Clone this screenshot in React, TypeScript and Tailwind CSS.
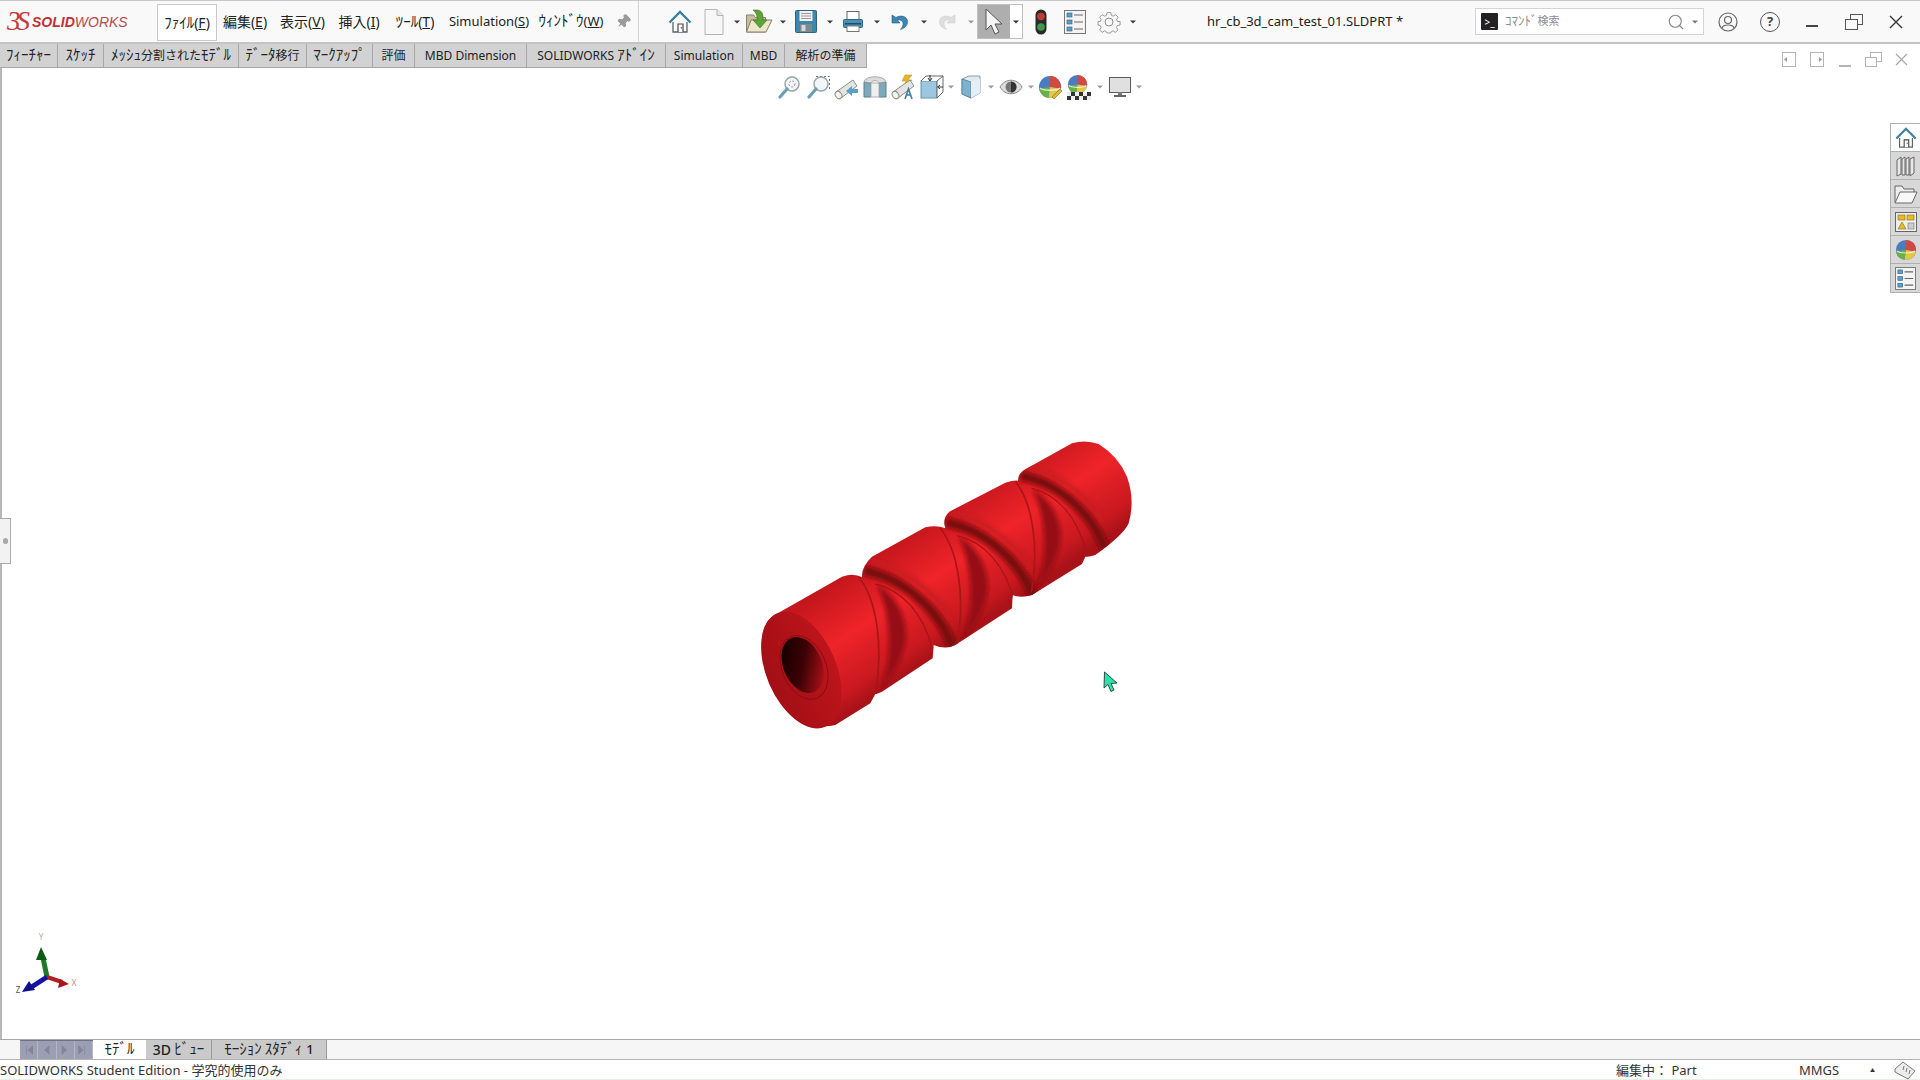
import React from "react";
import { Pin, Search } from "lucide-react";

const ui = "font-['Noto_Sans','Noto_Sans_CJK_JP',sans-serif]";

const menus = [
  { pre: "ﾌｧｲﾙ(", key: "F", w: "w-[60px]", size: "text-[14px]", active: true },
  { pre: "編集(", key: "E", w: "w-[56px]", size: "text-[14px]" },
  { pre: "表示(", key: "V", w: "w-[59px]", size: "text-[14px]" },
  { pre: "挿入(", key: "I", w: "w-[54px]", size: "text-[14px]" },
  { pre: "ﾂｰﾙ(", key: "T", w: "w-[58px]", size: "text-[14px]" },
  { pre: "Simulation(", key: "S", w: "w-[90px]", size: "text-[13px]" },
  { pre: "ｳｨﾝﾄﾞｳ(", key: "W", w: "w-[74px]", size: "text-[13px]" },
];

const tabs = [
  { label: "ﾌｨｰﾁｬｰ", w: "w-[58px]" },
  { label: "ｽｹｯﾁ", w: "w-[46px]" },
  { label: "ﾒｯｼｭ分割されたﾓﾃﾞﾙ", w: "w-[135px]" },
  { label: "ﾃﾞｰﾀ移行", w: "w-[68px]" },
  { label: "ﾏｰｸｱｯﾌﾟ", w: "w-[66px]" },
  { label: "評価", w: "w-[42px]" },
  { label: "MBD Dimension", w: "w-[112px]" },
  { label: "SOLIDWORKS ｱﾄﾞｲﾝ", w: "w-[139px]" },
  { label: "Simulation", w: "w-[77px]" },
  { label: "MBD", w: "w-[42px]" },
  { label: "解析の準備", w: "w-[82px]" },
];

// half width katakana looks too small next to the rest, so it gets its own size
function T({ text, kana = "text-[15px]" }: { text: string; kana?: string }) {
  return (
    <span className="whitespace-pre">
      {text.split(/([\uFF61-\uFF9F]+)/).map((part, i) =>
        i % 2 === 1 ? (
          <span key={i} className={`${kana} leading-none`}>{part}</span>
        ) : (
          <span key={i}>{part}</span>
        )
      )}
    </span>
  );
}

function Caret({ w = "w-[13px]", light = false }: { w?: string; light?: boolean }) {
  return (
    <div className={`${w} flex items-center justify-center`}>
      <svg width="6" height="4" viewBox="0 0 6 4">
        <path d="M0 0.5h6L3 3.5z" fill={light ? "#9a9a9a" : "#3c3c3c"} />
      </svg>
    </div>
  );
}

function Cell({ children, w = "w-[34px]" }: { children: React.ReactNode; w?: string }) {
  return <div className={`${w} h-full flex items-center justify-center`}>{children}</div>;
}

function HomeIcon({ size = 24, fill = "none" }: { size?: number; fill?: string }) {
  return (
    <svg width={size} height={size} viewBox="0 0 24 24">
      <path d="M5 12v10h14V12" fill={fill} stroke="#55666e" strokeWidth="1.3" />
      <path d="M1.5 12.5 12 2l10.5 10.5" fill="none" stroke="#3f7f9c" strokeWidth="2.4" />
      <path d="M10 22v-8h5v8" fill="#fff" stroke="#444" strokeWidth="1.2" />
      <rect x="12.8" y="17" width="1" height="1.6" fill="#444" />
    </svg>
  );
}

function NewDoc() {
  return (
    <svg width="22" height="28" viewBox="0 0 22 28">
      <path d="M2 1.5h12l6 6v19H2z" fill="#f7f7f7" stroke="#b4b4b4" />
      <path d="M14 1.5v6h6" fill="#e8e8e8" stroke="#b4b4b4" />
    </svg>
  );
}

function OpenIcon() {
  return (
    <svg width="28" height="26" viewBox="0 0 28 26">
      <path d="M1.5 6h7l2 2.5h10V23H1.5z" fill="#c9bf9d" stroke="#85806c" />
      <path d="M1.5 23 6 11h21l-6 12z" fill="#ece6cc" stroke="#85806c" />
      <path d="M8 1h4c4 0 6 3 6 7v3h4l-7 8-7-8h4V8c0-3-2-5-4-7z" fill="#5ea338" stroke="#3b7a20" strokeWidth=".6" />
    </svg>
  );
}

function SaveIcon() {
  return (
    <svg width="22" height="23" viewBox="0 0 22 23">
      <path d="M0.5 1.5a1 1 0 0 1 1-1h19a1 1 0 0 1 1 1v20a1 1 0 0 1-1 1h-19a1 1 0 0 1-1-1z" fill="#3f86aa" stroke="#2d6584" />
      <rect x="4.5" y="1" width="13" height="10" fill="#f2f2f2" />
      <path d="M6 3.5h10M6 6h10M6 8.5h10" stroke="#9a9a9a" />
      <rect x="5" y="14" width="12" height="8" fill="#7a8a90" />
      <rect x="6.5" y="15" width="4" height="6" fill="#d8d8d8" />
    </svg>
  );
}

function PrintIcon() {
  return (
    <svg width="20" height="21" viewBox="0 0 20 21">
      <rect x="4" y="0.5" width="12" height="8" fill="#fff" stroke="#666" />
      <rect x="0.5" y="8.5" width="19" height="8" rx="1" fill="#4a90b4" stroke="#2b6a8b" />
      <rect x="2" y="12" width="16" height="1.5" fill="#1c4d66" />
      <rect x="4" y="15" width="12" height="5.5" fill="#fff" stroke="#777" />
    </svg>
  );
}

function UndoIcon({ color = "#3b86b4", stroke = "#2a5f80", flip = false }: { color?: string; stroke?: string; flip?: boolean }) {
  return (
    <svg className={flip ? "-scale-x-100" : ""} width="18" height="18" viewBox="0 0 18 18">
      <path d="M1 2v8h8L6.5 7.5C8 6.5 11.5 7 12 10c.3 2-.5 4-2.500 6.500 5-1.500 7.500-5 7-8.500C16 3.500 10 1.500 5 4.500z" fill={color} stroke={stroke} strokeWidth=".6" />
    </svg>
  );
}

function ArrowCursor() {
  return (
    <svg width="20" height="28" viewBox="0 0 20 28">
      <path d="M2 1v21l5-5 4 9 4-2-4-8h7z" fill="#f5f5f5" stroke="#555" />
    </svg>
  );
}

function Traffic() {
  return (
    <svg width="12" height="26" viewBox="0 0 12 26">
      <rect x="0.500" y="0.500" width="11" height="25" rx="5.500" fill="#2a2a2a" />
      <circle cx="6" cy="7.500" r="3.800" fill="#c03a34" />
      <circle cx="6" cy="18" r="3.800" fill="#3d9a4c" />
    </svg>
  );
}

function ListIcon({ size = 22 }: { size?: number }) {
  return (
    <svg width={size} height={size + 2} viewBox="0 0 22 24">
      <rect x="0.500" y="0.500" width="21" height="23" fill="#f4f4f4" stroke="#777" />
      <rect x="3" y="3" width="5" height="4" fill="#5f9dc4" stroke="#2b5f80" strokeWidth=".6" />
      <rect x="3" y="10" width="5" height="4" fill="#5f9dc4" stroke="#2b5f80" strokeWidth=".6" />
      <rect x="3" y="17" width="5" height="4" fill="#5f9dc4" stroke="#2b5f80" strokeWidth=".6" />
      <path d="M10 5h9M10 12h9M10 19h9" stroke="#666" strokeWidth="1.200" />
    </svg>
  );
}

function GearIcon() {
  return (
    <svg width="24" height="24" viewBox="0 0 24 24" fill="none" stroke="#8c8c8c" strokeWidth="1">
      <circle cx="12" cy="12" r="4" />
      <path d="M10 1.500h4l.7 3.200 2 .9 2.800-1.700 2.800 2.800-1.700 2.800.9 2 3-.0v4l-3.200.7-.9 2 1.700 2.800-2.800 2.800-2.800-1.700-2 .9-.7 1.500h-4l-.7-1.500-2-.9-2.800 1.700-2.800-2.800 1.700-2.800-.9-2-2.600-.7v-4l2.600-.0.900-2-1.700-2.800 2.800-2.800 2.800 1.700 2-.9z" transform="translate(1.300 1.200) scale(.89)" />
    </svg>
  );
}

function Ball({ size = 24, id, pencil = false }: { size?: number; id: string; pencil?: boolean }) {
  return (
    <svg width={size} height={size} viewBox="0 0 24 24">
      <defs>
        <clipPath id={id}>
          <circle cx="12" cy="12" r="11" />
        </clipPath>
      </defs>
      <g clipPath={`url(#${id})`}>
        <rect width="24" height="24" fill="#4a7cc4" />
        <path d="M12 12 12 0h13v14z" fill="#cf4a40" />
        <path d="M12 12 24 14v11H10z" fill="#e0c84a" />
        <path d="M12 12 10 25H-2V14z" fill="#6cb04a" />
        <path d="M2 13c3 3 17 3 20 0" fill="none" stroke="#fff" strokeWidth="1.300" opacity=".75" />
      </g>
      {pencil && <path d="M14 22 22 14l2 2-8 8z" fill="#d9b93c" stroke="#8a7420" strokeWidth=".6" />}
    </svg>
  );
}

function Zoomer({ dashed = false }: { dashed?: boolean }) {
  return (
    <svg width="24" height="24" viewBox="0 0 24 24">
      {dashed && <path d="M9 1.500h13.500V15" fill="none" stroke="#777" strokeWidth="1" strokeDasharray="2 2" />}
      <circle cx="14" cy="9" r="7" fill="#f3f5f6" stroke="#98a5ab" strokeWidth="1.500" />
      <path d="M9 14 2 22" stroke="#6a9fb6" strokeWidth="3.200" strokeLinecap="round" />
      {!dashed && <circle cx="14" cy="9" r="3" fill="none" stroke="#8c9aa0" strokeDasharray="2 1.500" />}
    </svg>
  );
}

function Scope({ flash = false }: { flash?: boolean }) {
  return (
    <svg width="26" height="26" viewBox="0 0 26 26">
      {flash && <path d="M14 1h7l-4 5h4l-8 7 2-6h-4z" fill="#e6b422" stroke="#b08a16" strokeWidth=".5" />}
      <path d="M2 18 19 6l4 6L7 24z" fill="#e4e4e0" stroke="#8b8b86" />
      <ellipse cx="4.500" cy="21" rx="3" ry="4" fill="#f3f3ef" stroke="#8b8b86" transform="rotate(-35 4.500 21)" />
      {flash ? (
        <path d="M14 25l3.500-10L21 25M15 21h5" fill="none" stroke="#3f7f9c" strokeWidth="1.600" />
      ) : (
        <path d="M24 15h-6v-3l-6 5 6 5v-3h6z" fill="#5a9fc6" />
      )}
    </svg>
  );
}

function SectionIcon() {
  return (
    <svg width="26" height="24" viewBox="0 0 26 24">
      <path d="M2 7v15h7V8z" fill="#7ea9b8" stroke="#5b808c" />
      <path d="M17 8v14h7V7z" fill="#7ea9b8" stroke="#5b808c" />
      <path d="M9 8h8v14H9z" fill="#f0f0f0" stroke="#b0b0b0" />
      <path d="M2 7c1-7 21-7 22 0l-7 1c-1-3-7-3-8 0z" fill="#dcdcdc" stroke="#8f8f8f" strokeWidth=".7" />
    </svg>
  );
}

function ViewBox() {
  return (
    <svg width="24" height="24" viewBox="0 0 24 24">
      <rect x="1" y="6" width="16" height="17" fill="#9bc8e0" stroke="#6a94a8" />
      <path d="M1 6 6 1h17v16l-6 6V6" fill="#fff" stroke="#666" />
      <path d="M17 6 23 1" stroke="#666" />
      <path d="M10 0v5M8 3l2 3 2-3" fill="none" stroke="#333" />
      <path d="M23 12h-5M20 10l-2.500 2 2.500 2" fill="none" stroke="#333" />
    </svg>
  );
}

function CubeIcon() {
  return (
    <svg width="20" height="24" viewBox="0 0 20 24">
      <path d="M1 4 8 1h11v17l-9 5-9-4z" fill="#dfeaf0" stroke="#8e9ea6" />
      <path d="M1 4l9 3v16l-9-4z" fill="#7fb2cf" stroke="#5a8aa4" />
      <path d="M10 7l9-3v14l-9 5z" fill="#e4eff5" />
    </svg>
  );
}

function EyeIcon() {
  return (
    <svg width="24" height="18" viewBox="0 0 24 18">
      <path d="M1 9c5-9 17-9 22 0-5 9-17 9-22 0z" fill="#dedede" stroke="#888" />
      <circle cx="12" cy="9" r="5.500" fill="#777" />
      <path d="M12 3.500a5.500 5.500 0 0 1 0 11z" fill="#333" />
    </svg>
  );
}

function MonitorIcon() {
  return (
    <svg width="22" height="22" viewBox="0 0 22 22">
      <rect x="0.500" y="1.500" width="21" height="15" fill="#e0e0e0" stroke="#5a5a5a" />
      <rect x="9" y="16" width="4" height="3" fill="#777" />
      <rect x="5" y="19" width="12" height="2" fill="#666" />
    </svg>
  );
}

function BallChecker() {
  return (
    <div className="relative w-[24px] h-[26px]">
      <Ball size={21} id="ball-c" />
      <svg className="absolute left-0 bottom-0" width="24" height="8" viewBox="0 0 24 8">
        <rect width="24" height="8" fill="#333" />
        <path d="M0 0h4v4H0zM8 0h4v4H8zM16 0h4v4h-4zM4 4h4v4H4zM12 4h4v4h-4zM20 4h4v4h-4z" fill="#eee" />
      </svg>
    </div>
  );
}

function DocBtn({ children }: { children: React.ReactNode }) {
  return <div className="w-[28px] flex items-center justify-center">{children}</div>;
}

function Model() {
  const silhouette =
    "M110 578 300 470Q335 458 360 472Q358 440 390 410L550 322Q585 315 610 325Q600 295 622 275L790 188Q815 180 828 182Q828 160 850 148L990 70Q1030 58 1070 72Q1130 110 1155 170Q1180 240 1160 310Q1145 345 1060 405Q1040 412 1030 410L1020 432 870 525Q835 535 812 525L810 565 640 675Q610 690 575 675L572 715 420 815Q405 822 400 822L385 850 280 915Q240 925 200 910Q140 880 100 800Q60 720 62 640Q70 595 110 578Z";
  const groove = (
    <g>
      <path d="M350 470C405 540 425 680 400 820" fill="none" stroke="#a81419" strokeWidth="5" filter="url(#soft)" />
      <path d="M405 495C475 530 505 620 488 680C475 730 450 770 415 812C448 720 455 610 405 495Z" fill="#960d13" filter="url(#soft2)" />
      <path d="M400 492C480 510 545 580 572 690" fill="none" stroke="#a81318" strokeWidth="4" filter="url(#soft)" />
      <path d="M365 452C480 472 590 565 632 682" fill="none" stroke="#7a0a10" strokeWidth="30" filter="url(#soft2)" />
      <path d="M380 422C480 442 580 515 625 595" fill="none" stroke="#c61b20" strokeWidth="14" filter="url(#soft2)" />
    </g>
  );
  return (
    <svg className="absolute left-[740px] top-[352px]" width="420" height="320" viewBox="0 0 1260 960">
      <defs>
        <linearGradient id="body" gradientUnits="userSpaceOnUse" x1="300" y1="470" x2="495" y2="759">
          <stop offset="0" stopColor="#c4161c" />
          <stop offset=".22" stopColor="#d91d23" />
          <stop offset=".45" stopColor="#ef2429" />
          <stop offset=".62" stopColor="#dd1f25" />
          <stop offset=".85" stopColor="#c9191f" />
          <stop offset="1" stopColor="#a81218" />
        </linearGradient>
        <linearGradient id="hole" x1=".1" y1=".1" x2=".9" y2=".9">
          <stop offset="0" stopColor="#120000" />
          <stop offset=".5" stopColor="#3c0205" />
          <stop offset=".85" stopColor="#8f0d13" />
          <stop offset="1" stopColor="#b5141a" />
        </linearGradient>
        <linearGradient id="face" x1="0" y1="0" x2="1" y2="0">
          <stop offset="0" stopColor="#a20f15" />
          <stop offset="1" stopColor="#bd151b" />
        </linearGradient>
        <filter id="soft">
          <feGaussianBlur stdDeviation="2" />
        </filter>
        <filter id="soft2">
          <feGaussianBlur stdDeviation="6" />
        </filter>
        <clipPath id="sil">
          <path d={silhouette} />
        </clipPath>
      </defs>
      <path d={silhouette} fill="url(#body)" />
      <g clipPath="url(#sil)">
        {groove}
        <g transform="translate(245 -145)">{groove}</g>
        <g transform="translate(488 -262) scale(.95)">{groove}</g>
      </g>
      <ellipse cx="178" cy="750" rx="105" ry="185" transform="rotate(-23 178 750)" fill="url(#face)" />
      <ellipse cx="186" cy="742" rx="66" ry="100" transform="rotate(-23 186 742)" fill="none" stroke="#8c0d13" strokeWidth="3" />
      <ellipse cx="182" cy="735" rx="58" ry="88" transform="rotate(-23 182 735)" fill="url(#hole)" />
    </svg>
  );
}

function Triad() {
  return (
    <svg className="absolute left-0 top-[860px]" width="90" height="80" viewBox="0 0 90 80">
      <path d="M45 49 41 30" stroke="#1f7a25" strokeWidth="5" />
      <path d="M39 19l6 13H34z" fill="#0e5a14" />
      <path d="M45 49 60 54" stroke="#b02020" strokeWidth="4" />
      <path d="M67 56l-11 4 2-9z" fill="#a81818" />
      <path d="M45 49 28 60" stroke="#1414a0" strokeWidth="5" />
      <path d="M20 64l13-2-6-9z" fill="#10108c" />
      <text x="39" y="12" fontSize="8" fill="#9ab89a" textAnchor="middle">Y</text>
      <text x="72" y="58" fontSize="8" fill="#c98a8a" textAnchor="middle">X</text>
      <text x="16" y="65" fontSize="8" fill="#555" textAnchor="middle">Z</text>
    </svg>
  );
}

export default function App() {
  return (
    <div className={`w-[1920px] h-[1080px] flex flex-col overflow-hidden bg-white text-[#222] ${ui}`}>
      {/* title bar */}
      <div className="h-[44px] shrink-0 flex bg-[#f9f9f9] border-t border-t-[#c8c8c8] border-b-[2px] border-b-[#c4c4c4]">
        <div className="w-[157px] flex items-center pl-[7px] gap-[6px]">
          <span className="font-['Liberation_Serif',serif] italic text-[27px] leading-none text-[#c8383c] tracking-[-4px]">3S</span>
          <span className="font-['Liberation_Sans',sans-serif] italic text-[14px] text-[#bf3134] leading-none">
            <span className="font-bold">SOLID</span>
            <span className="text-[#b8494b]">WORKS</span>
          </span>
        </div>
        {menus.map((m) => (
          <div
            key={m.key + m.pre}
            className={`${m.w} ${m.size} flex items-center justify-center ${m.active ? "bg-white border border-[#c8c8c8] mt-[3px] mb-px" : ""}`}
          >
            <T text={m.pre} />
            <span className="underline">{m.key}</span>)
          </div>
        ))}
        <div className="w-[31px] flex items-center justify-center border-r border-[#d4d4d4]">
          <Pin size={15} fill="#9a9a9a" stroke="#9a9a9a" className="rotate-45" />
        </div>
        <div className="w-[1px]" />
        <div className="flex pl-[23px]">
          <Cell><HomeIcon /></Cell>
          <Cell><NewDoc /></Cell>
          <Caret w="w-[11px]" />
          <Cell><OpenIcon /></Cell>
          <Caret />
          <Cell><SaveIcon /></Cell>
          <Caret />
          <Cell><PrintIcon /></Cell>
          <Caret />
          <Cell><UndoIcon /></Cell>
          <Caret />
          <Cell><UndoIcon color="#dedede" stroke="#cfcfcf" flip /></Cell>
          <Caret light />
          <div className="w-[46px] my-[3px] flex border border-[#c0c0c0]">
            <div className="w-[32px] bg-[#aeaeae] flex items-center justify-center">
              <ArrowCursor />
            </div>
            <div className="flex-1 bg-white flex items-center justify-center">
              <svg width="6" height="4" viewBox="0 0 6 4">
                <path d="M0 0.500h6L3 3.500z" fill="#333" />
              </svg>
            </div>
          </div>
          <Cell w="w-[35px]"><Traffic /></Cell>
          <Cell><ListIcon /></Cell>
          <Cell><GearIcon /></Cell>
          <Caret w="w-[14px]" />
        </div>
        <div className="w-[335px] pl-[67px] flex items-center text-[13px] whitespace-nowrap">hr_cb_3d_cam_test_01.SLDPRT *</div>
        <div className="w-[229px] my-[7px] bg-white border border-[#d4d4d4] flex items-center pl-[5px] pr-[5px]">
          <div className="w-[17px] h-[17px] bg-[#222] rounded-[1px] flex items-center justify-center text-white text-[10px] leading-none">&gt;_</div>
          <span className="ml-[7px] text-[11px] text-[#8c8c8c]"><T text="ｺﾏﾝﾄﾞ検索" kana="text-[13px]" /></span>
          <Search size={18} stroke="#8a8a8a" strokeWidth={1.5} className="ml-auto" />
          <div className="ml-[7px]">
            <svg width="6" height="4" viewBox="0 0 6 4">
              <path d="M0 0.500h6L3 3.500z" fill="#777" />
            </svg>
          </div>
        </div>
        <div className="flex pl-[3px]">
          <Cell w="w-[42px]">
            <svg width="20" height="20" viewBox="0 0 20 20" fill="none" stroke="#666" strokeWidth="1.200">
              <circle cx="10" cy="10" r="9" />
              <circle cx="10" cy="8" r="3.500" />
              <path d="M4 16c1-4 11-4 12 0" />
            </svg>
          </Cell>
          <Cell w="w-[42px]">
            <div className="w-[20px] h-[20px] rounded-full border border-[#555] flex items-center justify-center text-[13px] font-bold leading-none text-[#444]">?</div>
          </Cell>
          <Cell w="w-[42px]"><div className="w-[12px] h-[2px] bg-[#444] mt-[9px]" /></Cell>
          <Cell w="w-[42px]">
            <svg width="18" height="16" viewBox="0 0 18 16" fill="none" stroke="#555">
              <rect x="5.500" y="0.500" width="12" height="10" />
              <rect x="0.500" y="5.500" width="12" height="10" fill="#f9f9f9" />
            </svg>
          </Cell>
          <Cell w="w-[42px]">
            <svg width="14" height="14" viewBox="0 0 14 14" stroke="#333" strokeWidth="1.400">
              <path d="M1 1l12 12M13 1 1 13" />
            </svg>
          </Cell>
        </div>
      </div>

      {/* command manager tabs */}
      <div className="h-[24px] shrink-0 flex text-[12px]">
        {tabs.map((t) => (
          <div
            key={t.label}
            className={`${t.w} flex items-center justify-center bg-[#d2d2d2] border-r border-b border-[#a8a8a8] whitespace-nowrap`}
          >
            <T text={t.label} />
          </div>
        ))}
        <div className="flex-1 flex items-start justify-end pr-[5px] pt-[8px]">
          <div className="flex">
            <DocBtn>
              <svg width="14" height="15" viewBox="0 0 14 15" fill="none" stroke="#b4b4b4">
                <rect x="0.500" y="0.500" width="13" height="14" />
                <path d="M5 5v5L2 7.500z" fill="#999" stroke="none" />
              </svg>
            </DocBtn>
            <DocBtn>
              <svg width="14" height="15" viewBox="0 0 14 15" fill="none" stroke="#b4b4b4">
                <rect x="0.500" y="0.500" width="13" height="14" />
                <path d="M9 5v5l3-2.500z" fill="#999" stroke="none" />
              </svg>
            </DocBtn>
            <DocBtn><div className="w-[12px] h-[2px] bg-[#b4b4b4] mt-[12px]" /></DocBtn>
            <DocBtn>
              <svg width="17" height="15" viewBox="0 0 17 15" fill="none" stroke="#b4b4b4">
                <rect x="5.500" y="0.500" width="11" height="9" />
                <rect x="0.500" y="5.500" width="11" height="9" fill="#fff" />
              </svg>
            </DocBtn>
            <DocBtn>
              <svg width="13" height="13" viewBox="0 0 13 13" stroke="#a8a8a8" strokeWidth="1.200">
                <path d="M1 1l11 11M12 1 1 12" />
              </svg>
            </DocBtn>
          </div>
        </div>
      </div>

      {/* graphics area */}
      <div className="flex-1 relative border-l-2 border-l-[#b8b8b8] bg-white">
        <div className="absolute left-[774px] top-[5px] h-[28px] flex items-center">
          <Cell w="w-[28px]"><Zoomer /></Cell>
          <Cell w="w-[29px]"><Zoomer dashed /></Cell>
          <Cell w="w-[28px]"><Scope /></Cell>
          <Cell w="w-[28px]"><SectionIcon /></Cell>
          <Cell w="w-[29px]"><Scope flash /></Cell>
          <Cell w="w-[28px]"><ViewBox /></Cell>
          <Caret w="w-[10px]" light />
          <Cell w="w-[29px]"><CubeIcon /></Cell>
          <Caret w="w-[11px]" light />
          <Cell w="w-[29px]"><EyeIcon /></Cell>
          <Caret w="w-[11px]" light />
          <Cell w="w-[28px]"><Ball id="ball-a" pencil /></Cell>
          <Cell w="w-[30px]"><BallChecker /></Cell>
          <Caret w="w-[11px]" light />
          <Cell w="w-[29px]"><MonitorIcon /></Cell>
          <Caret w="w-[10px]" light />
        </div>

        <div className="absolute right-0 top-[55px] w-[30px] flex flex-col border border-r-0 border-[#b0b0b0] bg-[#d8d8d8]">
          <div className="h-[28px] bg-white border-b border-[#b0b0b0] flex items-center justify-center"><HomeIcon size={22} /></div>
          <div className="h-[28px] border-b border-[#b0b0b0] flex items-center justify-center">
            <svg width="20" height="22" viewBox="0 0 20 22" fill="#e8e8e8" stroke="#666">
              <path d="M1 5 5 2v17l-4 2zM6 4l3-2v18H6zM10 4l3-2v18h-3zM14 4l4-2v16l-4 3z" />
            </svg>
          </div>
          <div className="h-[28px] border-b border-[#b0b0b0] flex items-center justify-center">
            <svg width="24" height="20" viewBox="0 0 24 20" fill="#ededed" stroke="#666">
              <path d="M1 18V2h7l2 3h10v3" />
              <path d="M1 19 6 8h17l-5 11z" fill="#f8f8f8" />
            </svg>
          </div>
          <div className="h-[28px] border-b border-[#b0b0b0] flex items-center justify-center">
            <svg width="22" height="20" viewBox="0 0 22 20">
              <rect x="0.500" y="0.500" width="21" height="19" fill="#eee" stroke="#666" />
              <rect x="3" y="3" width="7" height="5" fill="#e8b92c" stroke="#8a6d12" strokeWidth=".6" />
              <rect x="12" y="3" width="7" height="5" fill="#e8b92c" stroke="#8a6d12" strokeWidth=".6" />
              <path d="M3 17l4-7 4 7z" fill="#e8b92c" stroke="#8a6d12" strokeWidth=".6" />
              <rect x="13" y="11" width="6" height="6" fill="#ccc" stroke="#777" strokeWidth=".6" />
            </svg>
          </div>
          <div className="h-[28px] border-b border-[#b0b0b0] flex items-center justify-center"><Ball size={22} id="ball-b" /></div>
          <div className="h-[28px] flex items-center justify-center"><ListIcon size={21} /></div>
        </div>

        <div className="absolute left-[-2px] top-[450px] w-[11px] h-[46px] bg-[#f2f2f2] border border-l-0 border-[#aaa] flex items-center justify-center">
          <div className="w-[5px] h-[6px] rounded-full bg-[#a8a8a8]" />
        </div>

        <Model />
        <Triad />

        <svg className="absolute left-[1101px] top-[603px]" width="16" height="23" viewBox="0 0 16 23">
          <path d="M1.500 1 1 17l4-3.500 3 7 3-1.500-3-6.500 6-.5z" fill="#2fe0aa" stroke="#1b3f38" strokeWidth=".9" />
        </svg>
      </div>

      {/* bottom tabs */}
      <div className="h-[21px] shrink-0 flex bg-[#f6f6f6] border-t border-t-[#a8a8a8] border-b border-b-[#b4b4b4] text-[12px]">
        <div className="w-[20px]" />
        <div className="w-[73px] bg-[#9c9fb2] grid grid-cols-4 border-t border-[#6e7182]">
          {["M7 4v11M15 4l-6 5.500 6 5.500", "M13 4l-6 5.500 6 5.500", "M6 4l6 5.500-6 5.500", "M4 4l6 5.500L4 15M12 4v11"].map((d) => (
            <div key={d} className="flex items-center justify-center border-r border-[#b4b7c6]">
              <svg width="16" height="18" viewBox="0 0 20 19">
                <path d={d} fill="#82859a" stroke="#82859a" />
              </svg>
            </div>
          ))}
        </div>
        <div className="w-[53px] bg-white flex items-center justify-center"><T text="ﾓﾃﾞﾙ" /></div>
        <div className="w-[66px] bg-[#cacaca] border-r border-[#9a9a9a] flex items-center justify-center"><span className="text-[14px] font-medium">3D</span>&nbsp;<T text="ﾋﾞｭｰ" /></div>
        <div className="w-[115px] bg-[#cacaca] border-r border-[#9a9a9a] flex items-center justify-center whitespace-nowrap"><T text="ﾓｰｼｮﾝ ｽﾀﾃﾞｨ" /><span className="ml-1 font-medium text-[13px]">1</span></div>
      </div>

      {/* status bar */}
      <div className="h-[20px] shrink-0 flex items-center pt-[2px] bg-white text-[13px] text-[#333] border-b border-b-[#e3f3e3]">
        <span>SOLIDWORKS Student Edition - 学究的使用のみ</span>
        <span className="ml-auto w-[183px]">編集中： Part</span>
        <span className="w-[71px]">MMGS</span>
        <span className="w-[24px] text-[5px]">▲</span>
        <svg className="mr-[4px]" width="22" height="20" viewBox="0 0 22 20" fill="#ececec" stroke="#777">
          <path d="M1 8 9 1l12 9-7 8-13-7z" />
          <path d="M10 5l-1 4M13 7l-1 4M16 9l-1 4" />
        </svg>
      </div>
    </div>
  );
}
